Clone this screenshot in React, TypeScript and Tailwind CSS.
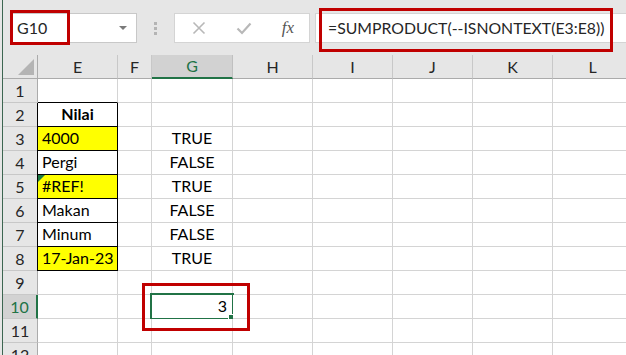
import React from "react";

const font = { fontFamily: "Lato, 'Liberation Sans', sans-serif" };

const columns = ["E", "F", "G", "H", "I", "J", "K", "L"];

type Cell = { text?: string; align?: "left" | "center" | "right"; bold?: boolean; yellow?: boolean; error?: boolean };

const data: Record<number, Record<string, Cell>> = {
  2: { E: { text: "Nilai", align: "center", bold: true } },
  3: { E: { text: "4000", yellow: true }, G: { text: "TRUE", align: "center" } },
  4: { E: { text: "Pergi" }, G: { text: "FALSE", align: "center" } },
  5: { E: { text: "#REF!", yellow: true, error: true }, G: { text: "TRUE", align: "center" } },
  6: { E: { text: "Makan" }, G: { text: "FALSE", align: "center" } },
  7: { E: { text: "Minum" }, G: { text: "FALSE", align: "center" } },
  8: { E: { text: "17-Jan-23", yellow: true }, G: { text: "TRUE", align: "center" } },
  10: { G: { text: "3", align: "right" } },
};

const rows = [1, 2, 3, 4, 5, 6, 7, 8, 9, 10, 11, 12];

const Toolbar = () => {
  return (
    <div className="flex h-[55px] shrink-0 items-start gap-0 bg-[#e6e6e6] pl-[7px] pt-[13px]">
      <div className="flex h-[30px] w-[127px] items-center justify-between border border-[#c8c8c8] bg-white pl-[6px] pr-[9px]">
        <span className="text-[16px] text-[#262626]">G10</span>
        <div className="h-0 w-0 border-l-[4px] border-r-[4px] border-t-[4px] border-l-transparent border-r-transparent border-t-[#7a7a7a]" />
      </div>
      <div className="flex h-[30px] w-[37px] flex-col items-center justify-center gap-[2px]">
        <div className="h-[3px] w-[3px] bg-[#b4b4b4]" />
        <div className="h-[3px] w-[3px] bg-[#b4b4b4]" />
        <div className="h-[3px] w-[3px] bg-[#b4b4b4]" />
      </div>
      <div className="flex h-[30px] w-[136px] items-center border border-[#d4d4d4] bg-white">
        <div className="flex w-[46px] justify-center pl-[2px]">
          <svg width="14" height="14" viewBox="0 0 14 14">
            <path d="M1.5 1.5 L12.5 12.5 M12.5 1.5 L1.5 12.5" stroke="#b8b8b8" strokeWidth="1.6" />
          </svg>
        </div>
        <div className="flex w-[46px] justify-center">
          <svg width="16" height="13" viewBox="0 0 16 13">
            <path d="M1.5 6.5 L6 11 L14.5 1.5" stroke="#b8b8b8" strokeWidth="2.2" fill="none" />
          </svg>
        </div>
        <div className="flex w-[42px] justify-center">
          <span className="text-[17px] italic text-[#555]" style={{ fontFamily: "'Liberation Serif', serif" }}>
            fx
          </span>
        </div>
      </div>
      <div className="ml-[5px] flex h-[30px] flex-1 items-center border border-r-0 border-[#d4d4d4] bg-white pl-[12px]">
        <span className="text-[15.8px] text-[#262626]">=SUMPRODUCT(--ISNONTEXT(E3:E8))</span>
      </div>
    </div>
  );
};

const HeaderRow = () => {
  return (
    <>
      <div className="relative h-[24px] border-b border-r border-[#ababab] bg-[#e6e6e6]">
        <div className="absolute bottom-[3px] right-[3px] h-0 w-0 border-b-[16px] border-l-[16px] border-b-[#b4b4b4] border-l-transparent" />
      </div>
      {columns.map((c) =>
        c === "G" ? (
          <div
            key={c}
            className="flex h-[24px] items-center justify-center border-b-2 border-r border-b-[#217346] border-r-[#c0c0c0] bg-[#d2d2d2] text-[16px] text-[#217346]"
          >
            {c}
          </div>
        ) : (
          <div
            key={c}
            className="flex h-[24px] items-center justify-center border-b border-r border-b-[#ababab] border-r-[#c8c8c8] bg-[#e6e6e6] text-[16px] text-[#262626]"
          >
            {c}
          </div>
        )
      )}
    </>
  );
};

const DataCell = ({ row, col }: { row: number; col: string }) => {
  const cell = data[row]?.[col] || {};
  const boxed = col === "E" && row >= 2 && row <= 8;
  const selected = col === "G" && row === 10;
  return (
    <div
      className={[
        "relative flex h-[24px] items-end pb-[2px] text-[16px] leading-[20px] text-black",
        boxed ? "border-b border-r border-black shadow-[-1px_0_0_#000]" : "border-b border-r border-[#d4d4d4]",
        col === "E" && row === 1 ? "border-b-black" : "",
        cell.yellow ? "bg-[#ffff00]" : "bg-white",
        cell.align === "center" ? "justify-center" : cell.align === "right" ? "justify-end pr-[5px]" : "justify-start pl-[4px]",
        cell.bold ? "font-bold" : "",
      ].join(" ")}
    >
      {cell.error && (
        <div className="absolute left-0 top-0 h-0 w-0 border-r-[7px] border-t-[7px] border-r-transparent border-t-[#1e7b45]" />
      )}
      {cell.text}
      {selected && (
        <div className="absolute -left-[2px] -top-[2px] h-[27px] w-[84px] border-2 border-[#217346]">
          <div className="absolute -bottom-[3px] -right-[3px] h-[6px] w-[6px] bg-[#217346] outline outline-1 outline-white" />
        </div>
      )}
    </div>
  );
};

const RowHeader = ({ row }: { row: number }) => {
  if (row === 10) {
    return (
      <div className="flex h-[24px] items-center justify-center border-b border-r-2 border-b-[#c8c8c8] border-r-[#217346] bg-[#d2d2d2] text-[16px] text-[#217346]">
        {row}
      </div>
    );
  }
  return (
    <div className="flex h-[24px] items-center justify-center border-b border-r border-b-[#c8c8c8] border-r-[#ababab] bg-[#e6e6e6] text-[16px] text-[#262626]">
      {row}
    </div>
  );
};

export default function App() {
  return (
    <div className="relative flex h-[355px] w-[626px] overflow-hidden bg-[#e6e6e6]" style={font}>
      <div className="h-full w-[3px] shrink-0 border-r border-[#3d6651] bg-[#e6e6e6]" />
      <div className="flex min-w-0 flex-1 flex-col">
        <Toolbar />
        <div className="grid shrink-0 grid-cols-[35px_80px_34px_81px_80px_80px_80px_80px_80px]">
          <HeaderRow />
          {rows.map((r) => (
            <React.Fragment key={r}>
              <RowHeader row={r} />
              {columns.map((c) => (
                <DataCell key={c} row={r} col={c} />
              ))}
            </React.Fragment>
          ))}
        </div>
      </div>

      {/* red annotation boxes */}
      <div className="absolute left-[10px] top-[10px] h-[35px] w-[60px] border-[3px] border-[#c00000]" />
      <div className="absolute left-[319px] top-[8px] h-[44px] w-[294px] border-[3px] border-[#c00000]" />
      <div className="absolute left-[142px] top-[283px] h-[48px] w-[108px] border-[3px] border-[#c00000]" />
    </div>
  );
}
